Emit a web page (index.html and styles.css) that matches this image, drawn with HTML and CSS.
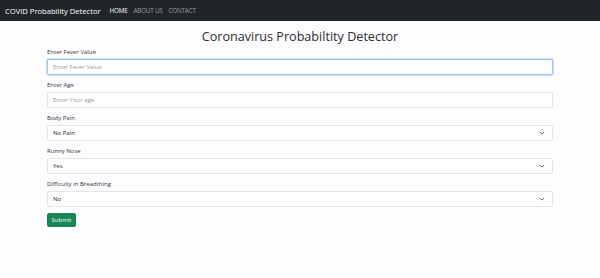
FILE: index.html
```html
<!DOCTYPE html>
<html lang="en">
<head>
    <meta charset="UTF-8">
    <meta name="viewport" content="width=device-width, initial-scale=1.0">
    <title>COVID Probability Detector</title>
    <link rel="stylesheet" href="styles.css">
</head>
<body>
    <nav class="navbar">
        <span class="brand">COVID Probability Detector</span>
        <a class="nav-link active" href="#">HOME</a>
        <a class="nav-link" href="#">ABOUT US</a>
        <a class="nav-link" href="#">CONTACT</a>
    </nav>
    <main class="container">
        <h1>Coronavirus Probabiltity Detector</h1>
        <form>
            <div class="group">
                <label for="fever">Enter Fever Value</label>
                <input class="field focused" id="fever" type="text" placeholder="Enter Fever Value">
            </div>
            <div class="group">
                <label for="age">Enter Age</label>
                <input class="field" id="age" type="text" placeholder="Enter Your age">
            </div>
            <div class="group">
                <label for="pain">Body Pain</label>
                <select class="field select" id="pain">
                    <option>No Pain</option>
                    <option>Pain</option>
                </select>
            </div>
            <div class="group">
                <label for="nose">Runny Nose</label>
                <select class="field select" id="nose">
                    <option>Yes</option>
                    <option>No</option>
                </select>
            </div>
            <div class="group">
                <label for="breath">Difficulty in Breadthing</label>
                <select class="field select" id="breath">
                    <option>No</option>
                    <option>Yes</option>
                </select>
            </div>
            <button type="submit" class="btn-submit">Submit</button>
        </form>
    </main>
</body>
</html>
```

FILE: styles.css
```css
body {
    font-family: "Open Sans", "Noto Sans", sans-serif;
    margin: 0;
    padding: 0;
    background-color: #fdfcfe;
    color: #212529;
}

.navbar {
    background-color: #212529;
    height: 21px;
    display: flex;
    align-items: center;
    padding-left: 5px;
}

.brand {
    color: #fff;
    font-size: 7.6px;
    margin-right: 9px;
}

.nav-link {
    color: #9a9da0;
    font-size: 6.3px;
    text-decoration: none;
    margin-right: 6px;
    letter-spacing: -0.2px;
}

.nav-link.active {
    color: #fff;
}

.container {
    width: 506px;
    margin: 0 auto;
}

h1 {
    font-size: 12.6px;
    font-weight: 500;
    text-align: center;
    margin: 8px 0 3px;
    line-height: 16px;
    color: #2b2f33;
}

.group {
    display: flex;
    flex-direction: column;
    margin-bottom: 6px;
}

label {
    font-size: 6px;
    line-height: 9px;
    margin-bottom: 2px;
    color: #343a40;
}

.field {
    box-sizing: border-box;
    height: 16px;
    width: 100%;
    border: 1px solid #e3e5e8;
    border-radius: 2px;
    background-color: #fff;
    font-family: inherit;
    font-size: 6px;
    padding: 0 5px;
    color: #212529;
    margin: 0;
}

.field::placeholder {
    color: #959ba1;
}

.field.focused {
    border-color: #9cc3fb;
    box-shadow: 0 0 0 1px #cfe0fc;
    outline: none;
}

.select {
    appearance: none;
    -webkit-appearance: none;
    background-image: url("data:image/svg+xml,%3csvg xmlns='http://www.w3.org/2000/svg' viewBox='0 0 16 16'%3e%3cpath fill='none' stroke='%23555' stroke-linecap='round' stroke-linejoin='round' stroke-width='2.5' d='M3 6l5 5 5-5'/%3e%3c/svg%3e");
    background-repeat: no-repeat;
    background-position: right 7px center;
    background-size: 6px 6px;
}

.btn-submit {
    display: block;
    margin-top: 6px;
    height: 14px;
    width: 29px;
    padding: 0;
    background-color: #198754;
    color: #fff;
    border: 1px solid #198754;
    border-radius: 2px;
    font-family: inherit;
    font-size: 6px;
    cursor: pointer;
}
```
